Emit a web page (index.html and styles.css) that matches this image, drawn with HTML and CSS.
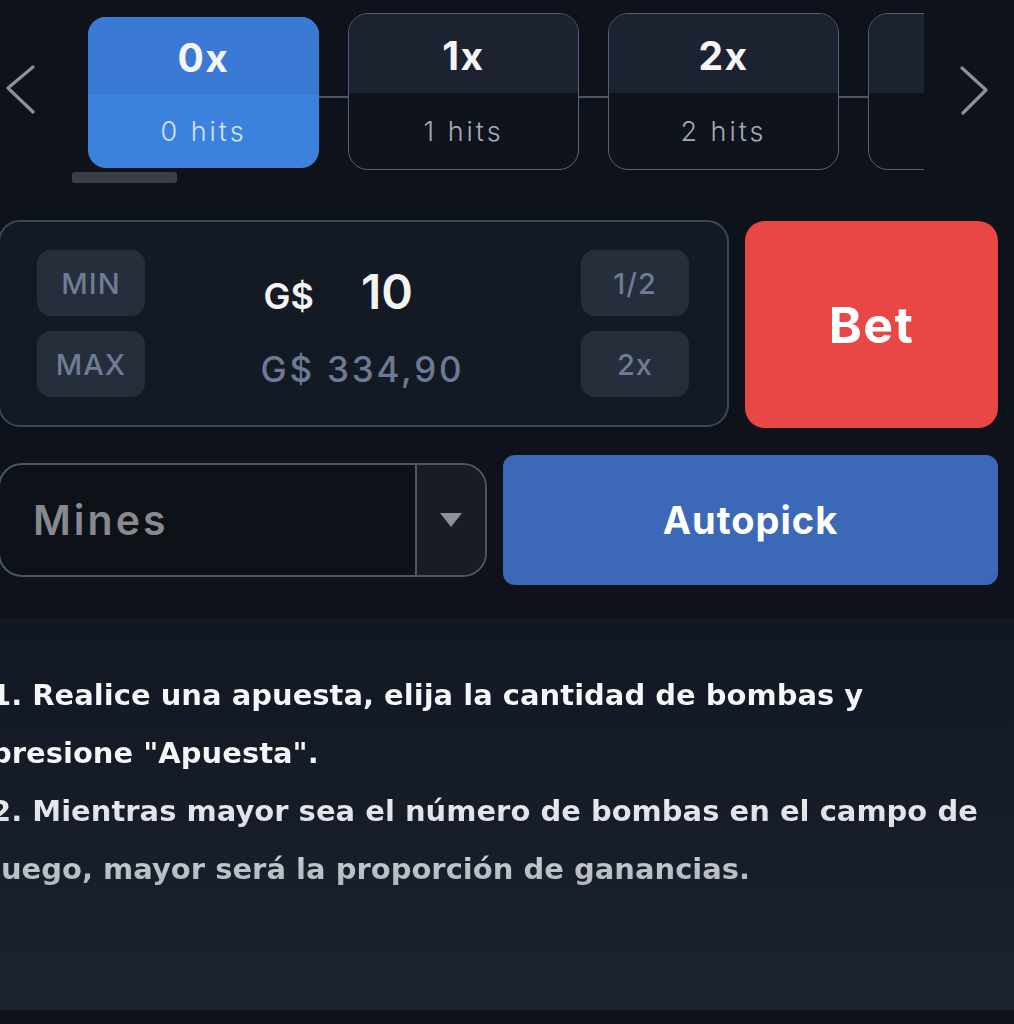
FILE: index.html
```html
<!DOCTYPE html>
<html lang="es">
<head>
<meta charset="utf-8">
<title>Mines</title>
<link rel="stylesheet" href="styles.css">
</head>
<body>
<div class="screen">
  <div class="carousel">
    <div class="arrow arrow-left">
      <svg width="30" height="50" viewBox="0 0 30 50"><path d="M27 2 L2 23 L27 47" fill="none" stroke="#8a919b" stroke-width="3.2" stroke-linecap="round" stroke-linejoin="round"/></svg>
    </div>
    <div class="viewport">
      <div class="track">
        <div class="card card-active">
          <div class="card-top">0x</div>
          <div class="card-bottom">0 hits</div>
        </div>
        <div class="card">
          <div class="card-top">1x</div>
          <div class="card-bottom">1 hits</div>
        </div>
        <div class="card">
          <div class="card-top">2x</div>
          <div class="card-bottom">2 hits</div>
        </div>
        <div class="card">
          <div class="card-top"></div>
          <div class="card-bottom"></div>
        </div>
      </div>
      <div class="scrollbar"></div>
    </div>
    <div class="arrow arrow-right">
      <svg width="30" height="50" viewBox="0 0 30 50"><path d="M2 2 L26 24 L3 47" fill="none" stroke="#8a919b" stroke-width="3.2" stroke-linecap="round" stroke-linejoin="round"/></svg>
    </div>
  </div>

  <div class="controls">
    <div class="row row-bet">
      <div class="bet-panel">
        <div class="btn-col">
          <div class="chip">MIN</div>
          <div class="chip">MAX</div>
        </div>
        <div class="amount">
          <div class="amount-inner">
            <div class="amount-line"><span class="cur">G$</span><span class="val">10</span></div>
            <div class="balance">G$ 334,90</div>
          </div>
        </div>
        <div class="btn-col">
          <div class="chip">1/2</div>
          <div class="chip">2x</div>
        </div>
      </div>
      <div class="bet-btn">Bet</div>
    </div>
    <div class="row row-mines">
      <div class="select">
        <div class="select-value">Mines</div>
        <div class="select-toggle"><span class="tri"></span></div>
      </div>
      <div class="autopick">Autopick</div>
    </div>
  </div>

  <div class="info">
    <p class="rules">1. Realice una apuesta, elija la cantidad de bombas y presione "Apuesta".<br>2. Mientras mayor sea el número de bombas en el campo de juego, mayor será la proporción de ganancias.</p>
  </div>
</div>
</body>
</html>
```
FILE: styles.css
```css
* { box-sizing: border-box; }
html, body { margin: 0; padding: 0; background: #0e121a; }
body { font-family: "Inter", "Liberation Sans", sans-serif; }

.screen {
  width: 1014px;
  height: 1024px;
  overflow: hidden;
  background: #0e121a;
}

/* carousel */
.carousel {
  display: flex;
  padding-top: 13px;
  height: 220px;
}
.arrow { flex-shrink: 0; }
.arrow-left { width: 60px; padding: 52px 0 0 6px; }
.arrow-right { flex: 1; padding: 53px 0 0 36px; }
.arrow svg { display: block; }

.viewport {
  width: 864px;
  flex-shrink: 0;
  overflow: hidden;
}
.track {
  position: relative;
  display: flex;
  align-items: flex-start;
  gap: 29px;
  padding-left: 28px;
  height: 157px;
}
.track::before {
  content: "";
  position: absolute;
  left: 28px;
  right: 0;
  top: 83px;
  height: 2px;
  background: #4c5667;
}
.card {
  position: relative;
  z-index: 1;
  flex-shrink: 0;
  width: 231px;
  height: 157px;
  display: flex;
  flex-direction: column;
  border: 1.5px solid #56627a;
  border-radius: 20px;
  overflow: hidden;
  background: #0f131b;
}
.card-top {
  height: 79px;
  background: #1c2230;
  display: flex;
  align-items: center;
  justify-content: center;
  padding-top: 4px;
  color: #f4f5f7;
  font-weight: 700;
  font-size: 39px;
  letter-spacing: 1.5px;
}
.card-bottom {
  flex: 1;
  display: flex;
  align-items: center;
  justify-content: center;
  color: #a3abb7;
  font-weight: 300;
  font-size: 27px;
  letter-spacing: 3px;
}
.card-active {
  margin-top: 4px;
  height: 151px;
  border: none;
  border-radius: 18px;
  background: #3d81df;
}
.card-active .card-top {
  height: 77px;
  background: #3a7ad5;
  border-bottom: 1px solid #3572c9;
}
.card-active .card-bottom { color: #d3e2f8; }

.scrollbar {
  margin: 2px 0 0 12px;
  width: 105px;
  height: 11px;
  border-radius: 3px;
  background: #393e47;
}

/* controls */
.controls {
  margin-left: -2px;
  width: 1000px;
  display: flex;
  flex-direction: column;
  gap: 27px;
}
.row { display: flex; gap: 16px; }

.bet-panel {
  width: 731px;
  height: 207px;
  border: 2px solid #3b4658;
  border-radius: 22px;
  background: #141a24;
  display: flex;
  align-items: center;
  padding: 0 38px 0 37px;
}
.btn-col {
  display: flex;
  flex-direction: column;
  gap: 15px;
}
.chip {
  width: 108px;
  height: 66px;
  border-radius: 14px;
  background: #262e3b;
  color: #6e7c95;
  display: flex;
  align-items: center;
  justify-content: center;
  font-size: 29px;
  font-weight: 500;
  letter-spacing: 1px;
}
.amount {
  flex: 1;
  display: flex;
  justify-content: center;
  padding-top: 10px;
}
.amount-inner {
  width: 205px;
  display: flex;
  flex-direction: column;
  gap: 15px;
}
.amount-line {
  display: flex;
  align-items: baseline;
  padding-left: 3px;
  color: #f3f3f4;
  height: 66px;
  padding-top: 7px;
}
.cur { font-size: 36px; font-weight: 600; }
.val { font-size: 48px; font-weight: 600; margin-left: 47px; }
.balance {
  color: #6b7a95;
  font-size: 35px;
  font-weight: 500;
  letter-spacing: 2.8px;
  height: 66px;
  display: flex;
  align-items: center;
}

.bet-btn {
  width: 253px;
  height: 207px;
  margin-top: 1px;
  border-radius: 20px;
  background: #e94646;
  color: #fff;
  display: flex;
  align-items: center;
  justify-content: center;
  font-size: 50px;
  font-weight: 700;
  letter-spacing: 1.5px;
}

.row-mines { align-items: center; height: 130px; }
.select {
  width: 489px;
  height: 114px;
  border: 2px solid #4b5667;
  border-radius: 24px;
  background: #0d1118;
  display: flex;
  overflow: hidden;
}
.select-value {
  flex: 1;
  display: flex;
  align-items: center;
  padding-left: 33px;
  color: #86898f;
  font-size: 41px;
  font-weight: 600;
  letter-spacing: 3px;
}
.select-toggle {
  width: 70px;
  border-left: 2px solid #4b5667;
  background: #171c25;
  display: flex;
  align-items: center;
  justify-content: center;
}
.tri {
  width: 0;
  height: 0;
  border-left: 11px solid transparent;
  border-right: 11px solid transparent;
  border-top: 14px solid #8c9199;
}
.autopick {
  width: 495px;
  height: 130px;
  border-radius: 12px;
  background: #3b68b7;
  color: #fff;
  display: flex;
  align-items: center;
  justify-content: center;
  font-size: 38px;
  font-weight: 700;
  letter-spacing: 1px;
}

/* info */
.info {
  margin-top: 33px;
  height: 392px;
  background: linear-gradient(180deg, #121822 0%, #161d29 50%, #1b2331 100%);
  padding-top: 48px;
}
.rules {
  margin: 0 0 0 -9px;
  width: 1012px;
  font-family: "DejaVu Sans", "Liberation Sans", sans-serif;
  font-weight: 700;
  font-size: 29px;
  line-height: 58px;
  background: linear-gradient(180deg, #f5f6f8 0%, #f5f6f8 48%, #dadde2 70%, #a9aeb6 100%);
  -webkit-background-clip: text;
  background-clip: text;
  color: transparent;
}
```
